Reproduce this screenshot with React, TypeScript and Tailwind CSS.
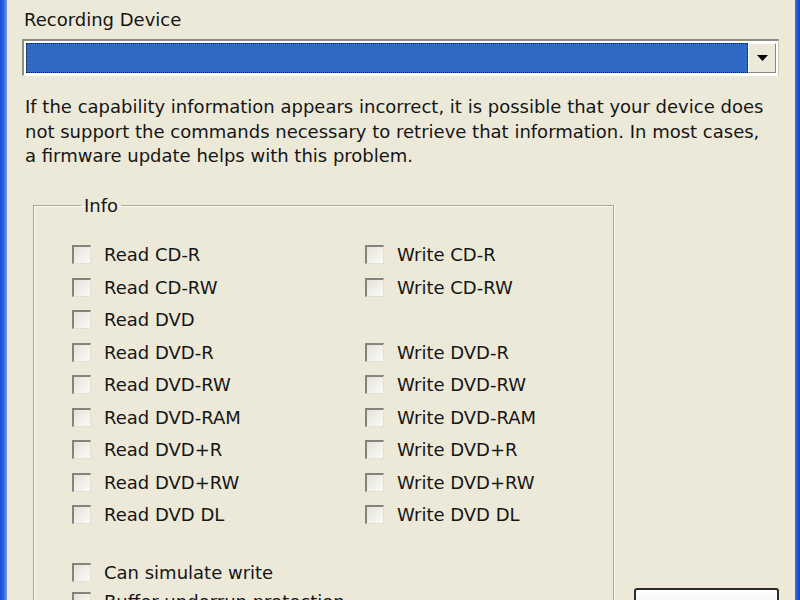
import React from 'react';

const rows: [string, string | null][] = [
  ['Read CD-R', 'Write CD-R'],
  ['Read CD-RW', 'Write CD-RW'],
  ['Read DVD', null],
  ['Read DVD-R', 'Write DVD-R'],
  ['Read DVD-RW', 'Write DVD-RW'],
  ['Read DVD-RAM', 'Write DVD-RAM'],
  ['Read DVD+R', 'Write DVD+R'],
  ['Read DVD+RW', 'Write DVD+RW'],
  ['Read DVD DL', 'Write DVD DL'],
];

const Check = ({ label }: { label: string }) => (
  <div className="flex items-center gap-[13px]">
    <div className="w-[19px] h-[19px] shrink-0 border-t-2 border-l-2 border-b border-r border-t-[#85847b] border-l-[#85847b] border-b-[#e2e0d6] border-r-[#e2e0d6] bg-gradient-to-br from-[#e4e2d8] to-[#fbfbf8]" />
    <span className="whitespace-nowrap">{label}</span>
  </div>
);

const App = () => {
  return (
    <div
      className="flex w-[800px] h-[600px] overflow-hidden bg-[#ece9d8] text-[18px] text-[#151515]"
      style={{ fontFamily: '"DejaVu Sans", Verdana, sans-serif' }}
    >
      {/* window frame left */}
      <div className="w-[7px] shrink-0 bg-gradient-to-r from-[#1d4fd0] via-[#2a62e0] to-[#7f9ee6]" />

      <div className="flex-1 min-w-0 pl-[15px] pr-[16px]">
        <div className="pt-[7px] pl-[2px] leading-[26px]">Recording Device</div>

        {/* combo box */}
        <div className="mt-[6px] h-[37px] flex border-t-2 border-l-2 border-b border-r border-t-[#8f8e85] border-l-[#8f8e85] border-b-white border-r-[#c9c7ba] bg-white p-[2px]">
          <div className="flex-1 bg-[#316ac5] outline-1 outline-dotted outline-[#1a1a1a] -outline-offset-1" />
          <div className="w-[28px] flex items-center justify-center bg-[#ece9d8] border border-t-white border-l-white border-b-[#8a887c] border-r-[#8a887c]">
            <svg width="11" height="6" viewBox="0 0 11 6">
              <path d="M0 0h11L5.5 6z" fill="#000" />
            </svg>
          </div>
        </div>

        <div className="mt-[19px] pl-[3px] leading-[24.5px] whitespace-nowrap">
          <p>If the capability information appears incorrect, it is possible that your device does</p>
          <p>not support the commands necessary to retrieve that information. In most cases,</p>
          <p>a firmware update helps with this problem.</p>
        </div>

        <div className="flex mt-[27px]">
          <fieldset className="w-[581px] ml-[11px] h-[420px] shrink-0 border border-[#aaa89a] shadow-[inset_1px_1px_0_#fbfbf6,1px_1px_0_#fbfbf6] pl-[38px] pt-[23px]">
            <legend className="ml-[9px] px-[3px] leading-[20px]">Info</legend>
            <div className="grid grid-cols-[293px_1fr]">
              {rows.map(([a, b]) => (
                <React.Fragment key={a}>
                  <div className="h-[32.5px] flex items-center">
                    <Check label={a} />
                  </div>
                  <div className="h-[32.5px] flex items-center">{b && <Check label={b} />}</div>
                </React.Fragment>
              ))}
            </div>
            <div className="mt-[27px] flex flex-col">
              <div className="h-[29px] flex items-center">
                <Check label="Can simulate write" />
              </div>
              <div className="h-[29px] flex items-center">
                <Check label="Buffer underrun protection" />
              </div>
            </div>
          </fieldset>

          <div className="ml-[20px] pt-[392px] shrink-0">
            <div className="w-[145px] h-[30px] rounded-[3px] border-2 border-[#2b2b2b] bg-gradient-to-b from-white to-[#ecebe5]" />
          </div>
        </div>
      </div>

      {/* window frame right */}
      <div className="w-[5px] shrink-0 bg-gradient-to-r from-[#3a6fe6] to-[#0a3fc9]" />
    </div>
  );
};

export default App;
